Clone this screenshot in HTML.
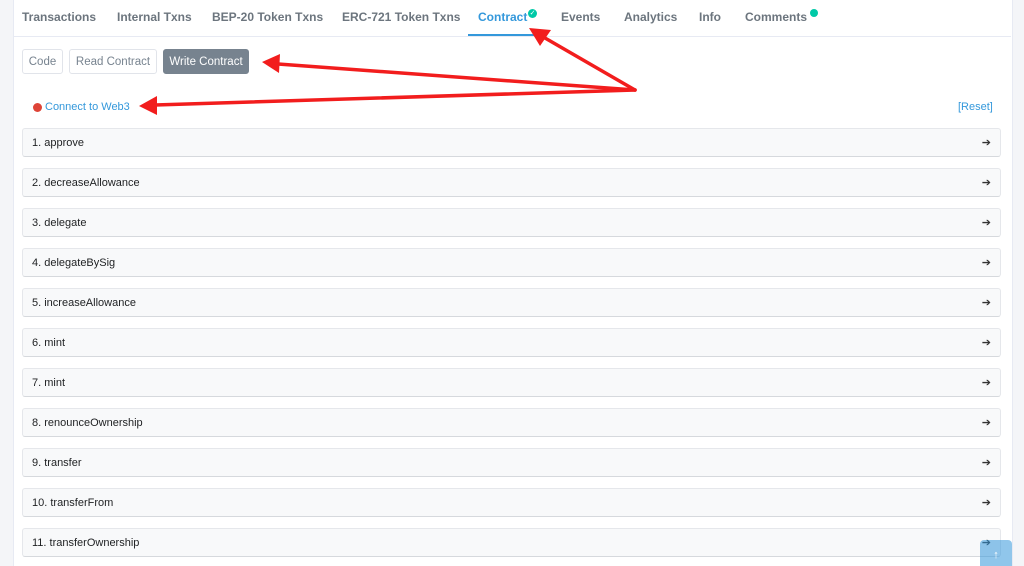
<!DOCTYPE html>
<html style="overflow:hidden;height:566px"><head><style>
body{margin:0;width:1024px;height:566px;overflow:hidden;background:#f4f5f8;font-family:"Liberation Sans",Arial,sans-serif;position:relative}
.card{position:absolute;left:13px;top:-6px;width:998px;height:580px;background:#fff;border:1px solid #e7eaf3;border-radius:6px}
.tabs{position:absolute;left:13px;top:0;width:998px;height:36px;border-bottom:1px solid #e7eaf3}
.tab{position:absolute;top:10px;font-size:12px;font-weight:bold;color:#6c757e}
.btn{position:absolute;top:49px;height:25px;line-height:24px;font-size:11.5px;border:1px solid #e1e4ea;border-radius:3px;color:#77838f;box-sizing:border-box;background:#fff;text-align:center}
.row{position:absolute;left:22px;width:979px;height:29px;background:#f8f9fa;border:1px solid #e5e7eb;border-bottom-color:#d6d9dd;border-radius:3px;box-sizing:border-box;font-size:11px;color:#1e2022;line-height:28px;padding-left:9px}
.row span{position:absolute;right:9px;top:0;font-size:11px;color:#333}
</style></head><body>
<div class="card"></div>
<div class="tabs"></div>
<div class="tab" style="left:22px">Transactions</div>
<div class="tab" style="left:117px">Internal Txns</div>
<div class="tab" style="left:212px">BEP-20 Token Txns</div>
<div class="tab" style="left:342px">ERC-721 Token Txns</div>
<div class="tab" style="left:478px;color:#3498db">Contract</div>
<div style="position:absolute;left:528px;top:9px;width:9px;height:9px;border-radius:50%;background:#00c9a7;color:#fff;font-size:7px;line-height:9px;text-align:center">✓</div>
<div style="position:absolute;left:468px;top:34px;width:78px;height:2px;background:#3498db"></div>
<div class="tab" style="left:561px">Events</div>
<div class="tab" style="left:624px">Analytics</div>
<div class="tab" style="left:699px">Info</div>
<div class="tab" style="left:745px">Comments</div>
<div style="position:absolute;left:810px;top:9px;width:8px;height:8px;border-radius:50%;background:#00c9a7"></div>
<div class="btn" style="left:22px;width:41px">Code</div>
<div class="btn" style="left:69px;width:88px">Read Contract</div>
<div class="btn" style="left:163px;width:86px;background:#77838f;color:#fff;border-color:#77838f">Write Contract</div>
<div style="position:absolute;left:33px;top:103px;width:9px;height:9px;border-radius:50%;background:#de4437"></div>
<div style="position:absolute;left:45px;top:101px;font-size:11px;color:#3498db">Connect to Web3</div>
<div style="position:absolute;left:958px;top:101px;font-size:11px;color:#3498db">[Reset]</div>
<div class="row" style="top:128px">1. approve<span>➔</span></div>
<div class="row" style="top:168px">2. decreaseAllowance<span>➔</span></div>
<div class="row" style="top:208px">3. delegate<span>➔</span></div>
<div class="row" style="top:248px">4. delegateBySig<span>➔</span></div>
<div class="row" style="top:288px">5. increaseAllowance<span>➔</span></div>
<div class="row" style="top:328px">6. mint<span>➔</span></div>
<div class="row" style="top:368px">7. mint<span>➔</span></div>
<div class="row" style="top:408px">8. renounceOwnership<span>➔</span></div>
<div class="row" style="top:448px">9. transfer<span>➔</span></div>
<div class="row" style="top:488px">10. transferFrom<span>➔</span></div>
<div class="row" style="top:528px">11. transferOwnership<span>➔</span></div>
<div style="position:absolute;left:980px;top:540px;width:32px;height:30px;border-radius:4px;background:rgba(52,152,219,0.55);color:#fff;font-size:11px;text-align:center;line-height:30px">↑</div>
<svg width="1024" height="566" style="position:absolute;left:0;top:0">
<g stroke="#f21d1d" stroke-width="3.5" fill="none" stroke-linecap="round">
<line x1="635" y1="90" x2="545" y2="38"/>
<line x1="635" y1="90" x2="278" y2="64"/>
<line x1="635" y1="90" x2="155" y2="105"/>
</g>
<g fill="#f21d1d">
<polygon points="529,28 551,30 540,46"/>
<polygon points="262,62 280,54 279,73"/>
<polygon points="139,106 157,96 157,115"/>
</g>
</svg>
</body></html>
